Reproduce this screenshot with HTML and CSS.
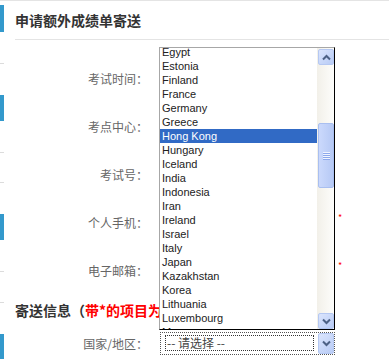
FILE: index.html
```html
<!DOCTYPE html>
<html lang="zh-CN">
<head>
  <meta charset="UTF-8" />
  <title>申请额外成绩单寄送</title>
  <link rel="stylesheet" href="styles.css">
</head>
<body>

<div class="page">
  <div class="side">
    <i class="bar"></i>
    <i class="tick"></i>
    <i class="bar"></i>
    <i class="tick"></i>
    <i class="tick"></i>
    <i class="bar"></i>
    <i class="tick"></i>
    <i class="tick"></i>
    <i class="bar"></i>
  </div>

  <div class="main">
    <div class="head"><h1>申请额外成绩单寄送</h1></div>

    <div class="form">
      <div class="row"><label>考试时间：</label><div class="field"></div></div>
      <div class="row"><label>考点中心：</label><div class="field"></div></div>
      <div class="row"><label>考试号：</label><div class="field"></div></div>
      <div class="row"><label>个人手机：</label><div class="field"></div><span class="req">*</span></div>
      <div class="row"><label>电子邮箱：</label><div class="field"></div><span class="req">*</span></div>
    </div>

    <h2>寄送信息（<em>带*的项目为必填项</em>）</h2>

    <div class="row row-country">
      <label>国家/地区：</label>
      <div class="combo">
        <div class="combo-val">-- 请选择 --</div>
        <div class="sb-btn">
          <svg width="9" height="7" viewBox="0 0 9 7"><path d="M1 1.5 L4.5 5 L8 1.5" fill="none" stroke="#4d6185" stroke-width="2"/></svg>
        </div>
      </div>
    </div>
  </div>

  <!-- open dropdown list -->
  <div class="listbox">
    <ul class="opts">
      <li>Egypt</li>
      <li>Estonia</li>
      <li>Finland</li>
      <li>France</li>
      <li>Germany</li>
      <li>Greece</li>
      <li class="sel">Hong Kong</li>
      <li>Hungary</li>
      <li>Iceland</li>
      <li>India</li>
      <li>Indonesia</li>
      <li>Iran</li>
      <li>Ireland</li>
      <li>Israel</li>
      <li>Italy</li>
      <li>Japan</li>
      <li>Kazakhstan</li>
      <li>Korea</li>
      <li>Lithuania</li>
      <li>Luxembourg</li>
      <li>Macau</li>
    </ul>
    <div class="scroll">
      <div class="sb-btn up">
        <svg width="9" height="7" viewBox="0 0 9 7"><path d="M1 5.5 L4.5 2 L8 5.5" fill="none" stroke="#4d6185" stroke-width="2"/></svg>
      </div>
      <div class="thumb"><span class="grip"></span></div>
      <div class="sb-btn down">
        <svg width="9" height="7" viewBox="0 0 9 7"><path d="M1 1.5 L4.5 5 L8 1.5" fill="none" stroke="#4d6185" stroke-width="2"/></svg>
      </div>
    </div>
  </div>
</div>

</body>
</html>
```

FILE: styles.css
```css
* { box-sizing: border-box; }
body {
  margin: 0;
  border-top: 1px solid #e4e4e4;
  background: #fff;
  font-family: "Noto Sans CJK SC", "Liberation Sans", sans-serif;
  color: #333;
  overflow: hidden;
}
.page {
  position: relative;
  display: flex;
  height: 358px;
}

/* left edge of the menu column */
.side {
  width: 4px;
  display: flex;
  flex-direction: column;
}
.side i { display: block; margin-top: 31px; }
.side .bar { height: 28px; background: #3399cc; }
.side .bar:first-child { margin-top: 4px; height: 30px; }
.side .tick { height: 1px; background: #dcdcdc; }
.side .tick + .tick { margin-top: 30px; }

.main {
  flex: 1;
  margin-left: 11px;
}
.head {
  height: 39px;
  border-bottom: 1px solid #e4e4e4;
}
h1 {
  margin: 0;
  font-size: 14px;
  line-height: 38px;
  font-weight: bold;
  color: #333;
}
.form { padding-top: 14px; }
.row {
  display: flex;
  align-items: center;
  height: 48px;
}
.row label {
  width: 133px;
  text-align: right;
  font-size: 12px;
  color: #666;
}
.field {
  width: 174px;
  height: 22px;
  margin-left: 12px;
  border: 1px solid #ccc;
}
.req {
  color: #f00;
  font-size: 9px;
  margin-left: 4px;
  margin-bottom: 10px;
}
h2 {
  margin: 0;
  height: 32px;
  line-height: 32px;
  font-size: 14px;
  font-weight: bold;
  color: #333;
  white-space: nowrap;
}
h2 em { font-style: normal; color: #f00; }

.row-country { height: 34px; }
.combo {
  width: 175px;
  height: 23px;
  margin-left: 12px;
  border: 1px dotted #555;
  display: flex;
  align-items: center;
}
.combo-val {
  width: 149px;
  height: 16px;
  margin-left: 4px;
  margin-right: 4px;
  border: 1px dotted #333;
  display: flex;
  align-items: center;
  font-size: 12px;
  line-height: 12px;
  padding-left: 1px;
  color: #444;
}
.combo .sb-btn { height: 21px; }

/* scrollbar buttons, XP style */
.sb-btn {
  width: 16px;
  height: 16px;
  display: flex;
  align-items: center;
  justify-content: center;
  border: 1px solid #b5c8f2;
  border-radius: 2px;
  background: linear-gradient(135deg, #dbe5fd, #b8cbf5);
}

.listbox {
  position: absolute;
  left: 159px;
  top: 46px;
  width: 176px;
  height: 283px;
  display: flex;
  border: 1px solid #000;
  border-top-color: #a7a7a7;
  border-left-color: #a7a7a7;
  background: #fff;
  overflow: hidden;
}
.opts {
  flex: 1;
  margin: -3px 0 0;
  padding: 0;
  list-style: none;
  font-family: "Liberation Sans", Arial, sans-serif;
  font-size: 11px;
  color: #222;
}
.opts li {
  height: 14px;
  line-height: 14px;
  padding-left: 2px;
}
.opts li.sel { background: #316ac5; color: #fff; }

.scroll {
  width: 17px;
  display: flex;
  flex-direction: column;
  align-items: flex-end;
  background: linear-gradient(90deg, #f2f0e9, #fdfdfb);
}
.scroll .up { margin-top: 1px; }
.thumb {
  width: 16px;
  height: 65px;
  margin-top: 58px;
  display: flex;
  align-items: center;
  justify-content: center;
  border: 1px solid #a9bff0;
  border-radius: 2px;
  background: linear-gradient(90deg, #cbd9fc, #b6c9f5);
}
.grip {
  width: 7px;
  height: 8px;
  background: repeating-linear-gradient(#f0f4ff 0 1px, #8ca8ec 1px 2px);
}
.scroll .down { margin-top: auto; }
```
